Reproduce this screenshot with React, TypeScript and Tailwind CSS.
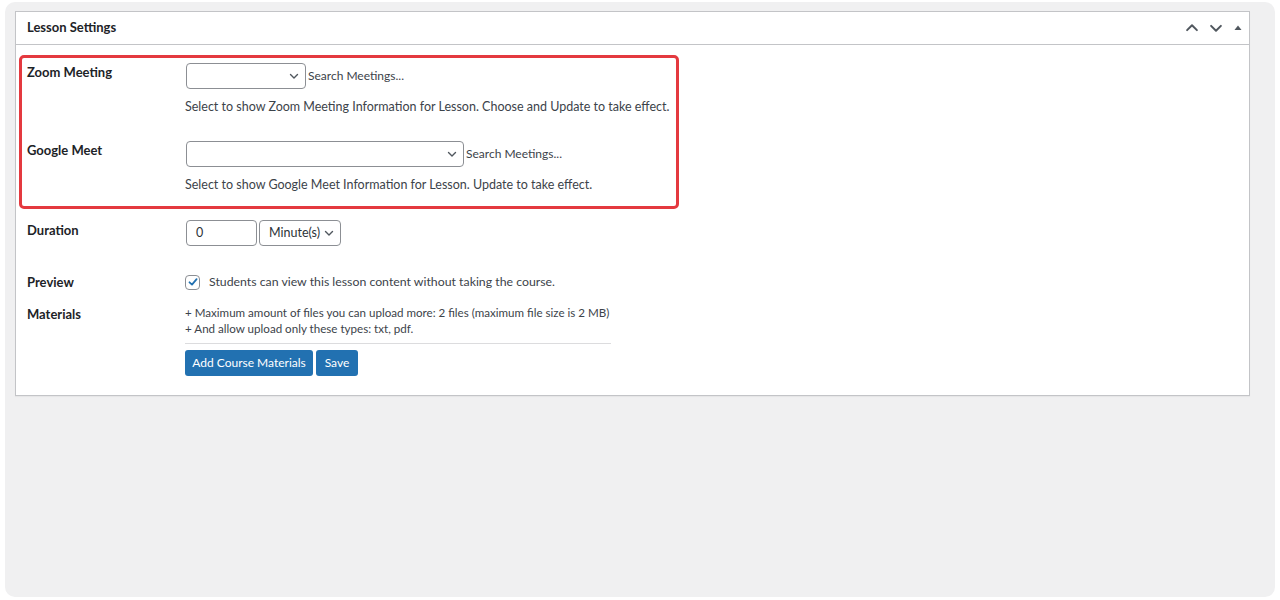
import React from 'react';

const font = { fontFamily: 'Lato, "Noto Sans", "Liberation Sans", sans-serif' };

const Chevron: React.FC<{ className?: string }> = ({ className }) => (
  <svg className={className} width="10" height="10" viewBox="0 0 10 10" fill="none">
    <path d="M1.5 3.5 5 7l3.5-3.5" stroke="#50575e" strokeWidth="1.4" strokeLinecap="round" strokeLinejoin="round" />
  </svg>
);

const SelectBox: React.FC<{ width: string; label?: string }> = ({ width, label }) => (
  <div
    className={`${width} h-[26px] shrink-0 rounded-[4px] border border-[#8c8f94] bg-white flex items-center justify-between pl-[9px] pr-[6px] text-[12.5px] text-[#2c3338]`}
  >
    <span className="whitespace-nowrap">{label}</span>
    <Chevron />
  </div>
);

export default function App() {
  return (
    <div className="min-h-screen w-full bg-white pl-[5px] pr-[5px] pt-[2px]" style={font}>
      <div className="h-[595px] rounded-[10px] bg-[#f0f0f1] pl-[10px] pr-[25px] pt-[9px]">
        {/* Card */}
        <div className="border border-[#c3c4c7] bg-white shadow-[0_1px_1px_rgba(0,0,0,0.04)]">
          {/* Header */}
          <div className="h-[33px] border-b border-[#c3c4c7] flex items-center justify-between pl-[11px] pr-[6px]">
            <h2 className="text-[13px] font-bold text-[#1d2327]">Lesson Settings</h2>
            <div className="flex items-center gap-[10px]">
              <Chevron className="rotate-180 w-[14px] h-[14px]" />
              <Chevron className="w-[14px] h-[14px]" />
              <svg width="10" height="10" viewBox="0 0 10 10">
                <path d="M5 2.5 8.5 7h-7z" fill="#50575e" />
              </svg>
            </div>
          </div>

          {/* Body */}
          <div className="pb-[19px] pt-[10px]">
            {/* Highlighted meetings box */}
            <div className="ml-[3px] w-[660px] rounded-[5px] border-[3px] border-[#e4393f] pl-[5px] pt-[5px] pb-[11px]">
              <div className="flex">
                <div className="w-[159px] shrink-0 text-[13px] font-bold leading-[20px] text-[#1d2327] -mt-[1px]">Zoom Meeting</div>
                <div>
                  <div className="flex items-center gap-[2px]">
                    <SelectBox width="w-[120px]" />
                    <span className="text-[12px] text-[#3c434a] whitespace-nowrap">Search Meetings...</span>
                  </div>
                  <p className="mt-[8px] -ml-[1px] text-[12.5px] leading-[20px] text-[#3c434a] whitespace-nowrap">
                    Select to show Zoom Meeting Information for Lesson. Choose and Update to take effect.
                  </p>
                </div>
              </div>
              <div className="flex mt-[24px]">
                <div className="w-[159px] shrink-0 text-[13px] font-bold leading-[20px] text-[#1d2327] -mt-[1px]">Google Meet</div>
                <div>
                  <div className="flex items-center gap-[2px]">
                    <SelectBox width="w-[278px]" />
                    <span className="text-[12px] text-[#3c434a] whitespace-nowrap">Search Meetings...</span>
                  </div>
                  <p className="mt-[8px] -ml-[1px] text-[12.5px] leading-[20px] text-[#3c434a] whitespace-nowrap">
                    Select to show Google Meet Information for Lesson. Update to take effect.
                  </p>
                </div>
              </div>
            </div>

            {/* Duration */}
            <div className="flex mt-[11px] pl-[11px]">
              <div className="w-[159px] shrink-0 text-[13px] font-bold leading-[20px] text-[#1d2327]">Duration</div>
              <div className="flex gap-[2px]">
                <div className="w-[71px] h-[26px] rounded-[4px] border border-[#8c8f94] flex items-center pl-[9px] text-[12.5px] text-[#2c3338]">0</div>
                <SelectBox width="w-[82px]" label="Minute(s)" />
              </div>
            </div>

            {/* Preview */}
            <div className="flex items-center mt-[26px] pl-[11px]">
              <div className="w-[158px] shrink-0 text-[13px] font-bold leading-[20px] text-[#1d2327]">Preview</div>
              <div className="flex items-center gap-[9px]">
                <div className="w-[15px] h-[15px] rounded-[4px] border border-[#8c8f94] flex items-center justify-center">
                  <svg width="12" height="12" viewBox="0 0 12 12" fill="none">
                    <path d="M2.5 6.3 5 8.6 9.6 3.2" stroke="#2271b1" strokeWidth="1.8" strokeLinecap="round" strokeLinejoin="round" />
                  </svg>
                </div>
                <span className="text-[12.3px] text-[#3c434a] whitespace-nowrap">Students can view this lesson content without taking the course.</span>
              </div>
            </div>

            {/* Materials */}
            <div className="flex mt-[11px] pl-[11px]">
              <div className="w-[158px] shrink-0 text-[13px] font-bold leading-[20px] text-[#1d2327] pt-[1px]">Materials</div>
              <div className="w-[426px]">
                <div className="pt-[2px] text-[11.6px] leading-[16px] text-[#3c434a] whitespace-nowrap">
                  <p>+ Maximum amount of files you can upload more: 2 files (maximum file size is 2 MB)</p>
                  <p>+ And allow upload only these types: txt, pdf.</p>
                </div>
                <div className="mt-[6px] border-t border-[#dcdcde]" />
                <div className="mt-[6px] flex gap-[3px]">
                  <button className="h-[26px] w-[128px] rounded-[3px] bg-[#2271b1] text-[12px] text-white whitespace-nowrap">Add Course Materials</button>
                  <button className="h-[26px] w-[42px] rounded-[3px] bg-[#2271b1] text-[12px] text-white">Save</button>
                </div>
              </div>
            </div>
          </div>
        </div>
      </div>
    </div>
  );
}
